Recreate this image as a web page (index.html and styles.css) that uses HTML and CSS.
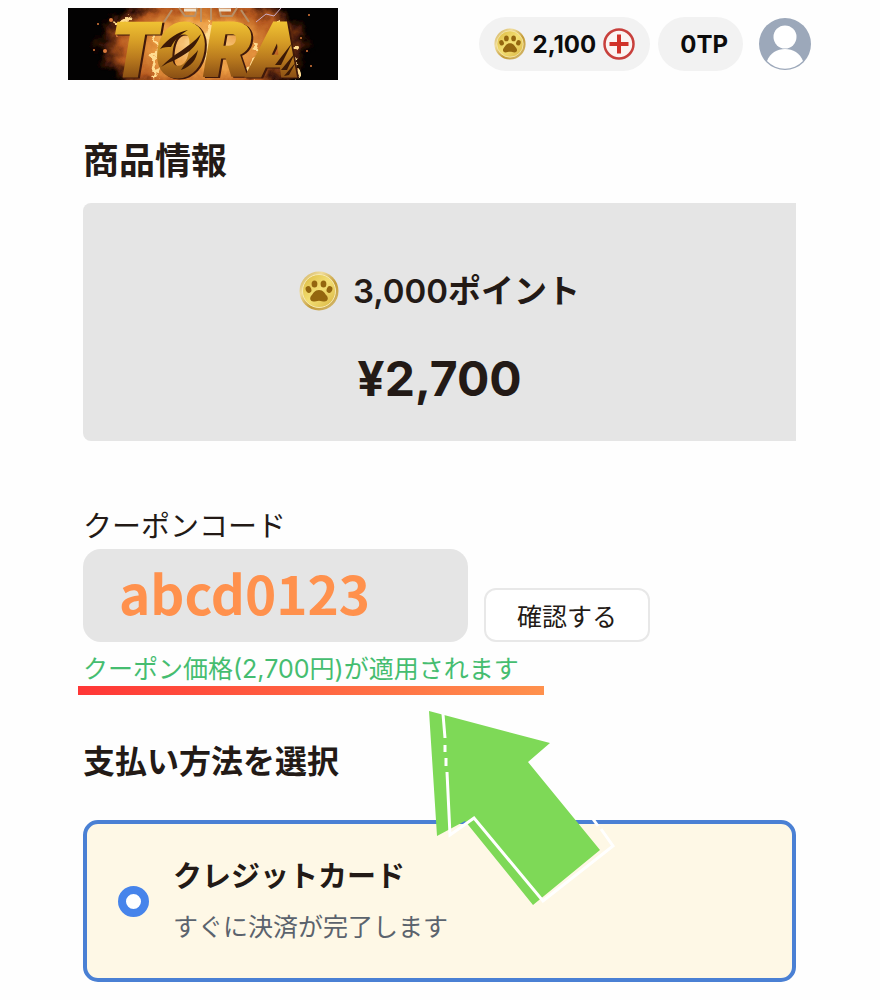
FILE: index.html
```html
<!DOCTYPE html>
<html lang="ja">
<head>
<meta charset="utf-8">
<meta name="viewport" content="width=device-width, initial-scale=1">
<title>TORA</title>
<link rel="stylesheet" href="styles.css">
</head>
<body>
<svg class="defs" width="0" height="0" aria-hidden="true">
  <defs>
    <linearGradient id="rim" x1="0" y1="0" x2="1" y2="1">
      <stop offset="0" stop-color="#c9a850"/><stop offset=".3" stop-color="#f0dc9a"/><stop offset=".6" stop-color="#c39a35"/><stop offset="1" stop-color="#d8c07c"/>
    </linearGradient>
    <linearGradient id="face" x1="0" y1="0" x2="1" y2="1">
      <stop offset="0" stop-color="#dcb93f"/><stop offset=".5" stop-color="#f3df74"/><stop offset="1" stop-color="#d9b440"/>
    </linearGradient>
    <symbol id="coin" viewBox="0 0 40 40">
      <circle cx="20" cy="20" r="19.5" fill="url(#rim)"/>
      <circle cx="20" cy="20" r="16.5" fill="url(#face)" stroke="#f6e9b0" stroke-width="1"/>
      <g fill="#94660f">
        <ellipse cx="15.500" cy="13" rx="2.900" ry="3.600"/>
        <ellipse cx="24.500" cy="13" rx="2.900" ry="3.600"/>
        <ellipse cx="9.500" cy="18.500" rx="2.800" ry="3.400" transform="rotate(-22 9.500 18.500)"/>
        <ellipse cx="30.500" cy="18.500" rx="2.800" ry="3.400" transform="rotate(22 30.500 18.500)"/>
        <path d="M20 19c4.500 0 5.600 3.400 7.600 5.600 2.400 3 1 5.900-2 5.900-2 0-3.600-.8-5.600-.8s-3.600.8-5.600.8c-3 0-4.400-2.900-2-5.900 2-2.200 3.100-5.600 7.600-5.600z"/>
      </g>
    </symbol>
  </defs>
</svg>
<header class="header">
  <a class="logo" href="#" aria-label="TORA">
    <svg class="logo-art" viewBox="0 0 270 72" width="270" height="72">
      <defs>
        <clipPath id="frame"><rect width="270" height="72"/></clipPath>
        <radialGradient id="fire" cx=".5" cy=".5" r=".5">
          <stop offset="0" stop-color="#ffdf9a"/><stop offset=".4" stop-color="#ea9a40"/><stop offset=".7" stop-color="#b4571f"/><stop offset=".88" stop-color="#3c1608"/><stop offset="1" stop-color="#000" stop-opacity="0"/>
        </radialGradient>
        <linearGradient id="gold" gradientUnits="userSpaceOnUse" x1="0" y1="14" x2="0" y2="70">
          <stop offset="0" stop-color="#efc233"/><stop offset=".35" stop-color="#d69d26"/><stop offset=".65" stop-color="#b97a1e"/><stop offset="1" stop-color="#8a4f14"/>
        </linearGradient>
        <filter id="rough" x="-5%" y="-10%" width="110%" height="120%">
          <feTurbulence type="fractalNoise" baseFrequency=".07" numOctaves="3" seed="8"/>
          <feDisplacementMap in="SourceGraphic" scale="24" xChannelSelector="R" yChannelSelector="G"/>
        </filter>
      </defs>
      <rect width="270" height="72" fill="#030202"/>
      <g clip-path="url(#frame)">
        <g filter="url(#rough)">
          <ellipse cx="134" cy="38" rx="112" ry="62" fill="url(#fire)"/>
          <g fill="none" stroke="#ffdc91" stroke-width="4">
            <path d="M86 24l4 18-6 28M146 10l-6 24 6 34M190 36l-8 34M48 16l16-8M210 14l12 18 8 38"/>
          </g>
        </g>
      </g>
      <g fill="none" stroke="#b89068" stroke-width="2">
        <path d="M111 0l6 8h10l2-8M151 0l2 8h11l5-8M133 0v14M143 0v12M104 2l-8 12M173 2l8 12"/>
        <path d="M116 2h12M151 2h12" stroke="#eee1cc" stroke-width="3"/>
      </g>
      <path d="M188 14l10-8 8 2 7-8" fill="none" stroke="#cdaec8" stroke-width="1"/>
      <g fill="#dc7b3d"><circle cx="43" cy="12" r="2"/><circle cx="30" cy="16" r="1"/><circle cx="37" cy="43" r="2"/><circle cx="26" cy="42" r="1"/><circle cx="233" cy="30" r="1"/><circle cx="241" cy="7" r="1"/><circle cx="239" cy="43" r="1"/><circle cx="49" cy="28" r="1"/><circle cx="229" cy="61" r="1"/><circle cx="243" cy="58" r="1"/></g>
      <text class="logo-text" x="44" y="68">TORA</text>
      <g fill="#3b1906">
        <path d="M92 41c8-11 18-17 28-19-9 5-14 11-17 17-4 0-7 0-11 2zM93 59c13-14 27-18 40-33-6 16-15 20-28 27-4 1-7 3-12 6zM113 62c7-12 11-12 17-20-2 10-6 16-17 20z"/>
        <path d="M207 57l17-22-11 22zM213 62l14-17-8 17zM216 68l12-14-7 13z"/>
      </g>
    </svg>
  </a>
  <div class="account">
    <div class="pill">
      <svg class="coin-small" aria-hidden="true"><use href="#coin"/></svg>
      <span>2,100</span>
      <button class="add" aria-label="ポイントを追加">
        <svg viewBox="0 0 32 32" width="32" height="32"><circle cx="16" cy="16" r="14.500" fill="#fbf4f2" stroke="#c8403c" stroke-width="2.500"/><path d="M16 6.500v19M6.500 16h19" stroke="#d13229" stroke-width="4"/></svg>
      </button>
    </div>
    <div class="pill pill-tp"><span>0TP</span></div>
    <button class="avatar" aria-label="アカウント">
      <svg viewBox="0 0 52 52" width="52" height="52"><circle cx="26" cy="26" r="26" fill="#9ca8ba"/><circle cx="26" cy="19" r="11.500" fill="#fff"/><path d="M8 43c3-8 10-12 18-12s15 4 18 12a25 25 0 0 1-36 0z" fill="#fff"/></svg>
    </button>
  </div>
</header>
<main class="main">
  <h2 class="title title-product">商品情報</h2>
  <section class="product">
    <div class="points"><svg class="coin-large" aria-hidden="true"><use href="#coin"/></svg><span>3,000ポイント</span></div>
    <div class="price">¥2,700</div>
  </section>
  <form class="coupon">
    <label class="coupon-label" for="code">クーポンコード</label>
    <div class="coupon-row">
      <input class="coupon-input" id="code" type="text" value="abcd0123">
      <button class="confirm" type="button">確認する</button>
    </div>
    <p class="applied">クーポン価格(2,700円)が適用されます</p>
  </form>
  <h2 class="title title-payment">支払い方法を選択</h2>
  <label class="method">
    <input class="radio" type="radio" name="payment" checked>
    <span class="method-text">
      <span class="method-name">クレジットカード</span>
      <span class="method-note">すぐに決済が完了します</span>
    </span>
  </label>
  <svg class="arrow" viewBox="0 0 200 200" width="200" height="200" aria-hidden="true">
    <path fill="#7ed957" d="M9 0l121 32-22 19 72 88-67 55-68-84-28 15z"/>
    <path fill="none" stroke="#fff" stroke-width="3" d="M23 3l2 24M25 34v7M26 47v8M27 61l3 63 24-17 69 83 70-55-12-17M178 115l-5-7"/>
  </svg>
</main>
</body>
</html>
```
FILE: styles.css
```css
* { box-sizing: border-box; }
body {
  margin: 0;
  background: #fefefe;
  color: #231a16;
  font-family: Inter, "Noto Sans CJK JP", sans-serif;
}
button { padding: 0; border: 0; background: none; color: inherit; font-family: inherit; cursor: pointer; }
svg { display: block; }
.defs { position: absolute; }

.header { display: flex; justify-content: space-between; align-items: center; padding: 8px 69px 0 68px; }
.logo-art { overflow: visible; }
.logo-text {
  font-family: Roboto, sans-serif;
  font-size: 73px;
  font-weight: 900;
  font-style: italic;
  fill: url(#gold);
  stroke: url(#gold);
  stroke-width: 3px;
  filter: drop-shadow(2px 1px 0 #40190a);
}
.account { display: flex; align-items: center; gap: 8px; }
.pill {
  display: flex;
  align-items: center;
  gap: 7px;
  height: 54px;
  padding: 0 15px;
  border-radius: 27px;
  background: #f2f2f2;
  color: #0c0c0c;
  font-size: 24px;
  font-weight: 700;
}
.pill-tp { padding: 0 15px 0 22px; }
.coin-small { width: 32px; height: 32px; }
.avatar { margin-left: 8px; }

.main { position: relative; padding: 57px 84px 19px 83px; }
.title { margin: 0; line-height: 48px; font-weight: 700; }
.title-product { margin-bottom: 18px; font-size: 36px; }
.title-payment { margin-bottom: 34px; font-size: 32px; }

.product {
  display: flex;
  flex-direction: column;
  align-items: center;
  gap: 36px;
  padding: 64px 0 34px;
  border-radius: 8px 0 0 8px;
  background: #e5e5e5;
}
.points { display: flex; align-items: center; gap: 14px; font-size: 33px; line-height: 48px; font-weight: 600; }
.coin-large { width: 40px; height: 40px; }
.price { font-size: 48px; line-height: 56px; font-weight: 700; }

.coupon { margin: 68px 0 51px; }
.coupon-label { display: block; margin-bottom: 4px; font-size: 29px; line-height: 36px; }
.coupon-row { display: flex; align-items: flex-end; gap: 16px; }
.coupon-input {
  width: 54%;
  height: 93px;
  padding: 0 36px 8px;
  border: 0;
  border-radius: 18px;
  background: #e5e5e5;
  color: #ff914d;
  font-family: "Noto Sans CJK JP", sans-serif;
  font-size: 53px;
  font-weight: 700;
}
.confirm { height: 54px; padding: 0 31px; border: 2px solid #e8e8e8; border-radius: 12px; background: #fff; font-size: 25px; }
.applied { position: relative; width: max-content; margin: 9px 0 0; color: #45bd70; font-size: 25px; line-height: 36px; }
.applied::after {
  content: "";
  position: absolute;
  left: -5px;
  right: -25px;
  bottom: -8px;
  height: 9px;
  background: linear-gradient(90deg, #ff3636, #ff914d);
}

.method {
  display: flex;
  align-items: center;
  gap: 24px;
  padding: 28px 31px 27px;
  border: 4px solid #4a80d4;
  border-radius: 15px;
  background: #fef8e6;
}
.radio { appearance: none; width: 31px; height: 31px; margin: 0; border: 8px solid #4684eb; border-radius: 50%; background: #fff; }
.method-text { display: flex; flex-direction: column; gap: 2px; padding-top: 1px; line-height: 48px; }
.method-name { font-size: 29px; line-height: 48px; font-weight: 700; }
.method-note { color: #5b636d; font-size: 25px; }
.arrow { position: absolute; left: 420px; bottom: 90px; }
```
